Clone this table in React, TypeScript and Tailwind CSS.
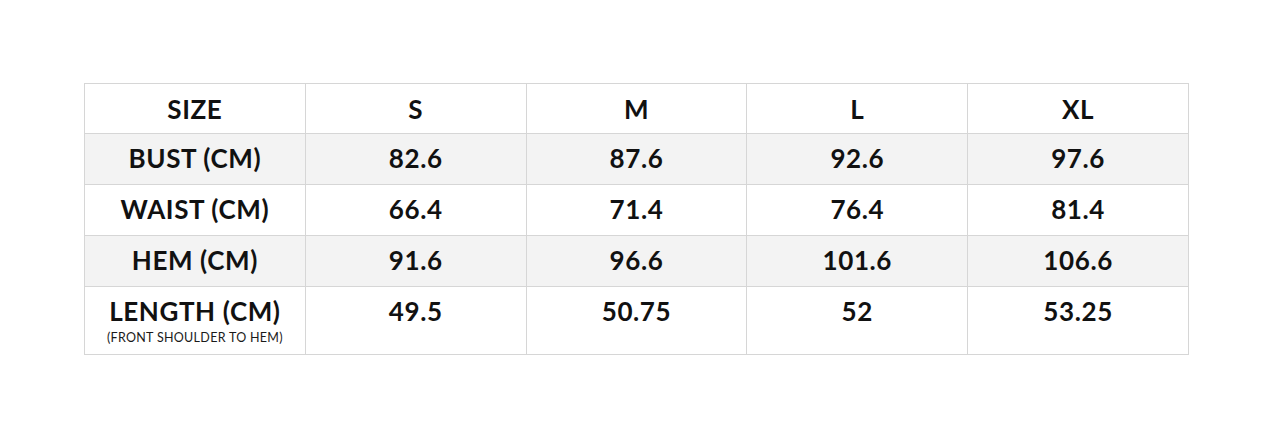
const rows = [
  { label: 'BUST (CM)', values: ['82.6', '87.6', '92.6', '97.6'] },
  { label: 'WAIST (CM)', values: ['66.4', '71.4', '76.4', '81.4'] },
  { label: 'HEM (CM)', values: ['91.6', '96.6', '101.6', '106.6'] },
  { label: 'LENGTH (CM)', values: ['49.5', '50.75', '52', '53.25'], note: '(FRONT SHOULDER TO HEM)' },
];

const sizes = ['S', 'M', 'L', 'XL'];

export default function App() {
  return (
    <div className="h-[430px] w-[1274px] bg-white pl-[84px] pt-[83px] font-['Lato',sans-serif] text-[#111]">
      <table className="w-[1105px] table-fixed border-collapse">
        <thead>
          <tr className="h-[50px] bg-white">
            <th className="border border-[#d6d6d6] pt-[1px] text-[26px] font-bold tracking-[0.6px]">SIZE</th>
            {sizes.map((s) => (
              <th key={s} className="border border-[#d6d6d6] pt-[1px] text-[26px] font-bold tracking-[0.6px]">{s}</th>
            ))}
          </tr>
        </thead>
        <tbody>
          {rows.map((row, i) => (
            <tr key={row.label} className={`${row.note ? 'h-[68px]' : 'h-[51px]'} ${i % 2 === 0 ? 'bg-[#f3f3f3]' : 'bg-white'}`}>
              <td className="border border-[#d6d6d6] pt-[9px] text-center align-top leading-[31px]">
                <div className="text-[26px] font-bold tracking-[0.6px]">{row.label}</div>
                {row.note && <div className="mt-[4px] text-[12.5px] font-normal leading-[14px] tracking-[0.3px] text-[#1a1a1a]">{row.note}</div>}
              </td>
              {row.values.map((v, j) => (
                <td key={j} className="border border-[#d6d6d6] pt-[9px] text-center align-top text-[26px] font-bold leading-[31px] tracking-[0.6px]">
                  {v}
                </td>
              ))}
            </tr>
          ))}
        </tbody>
      </table>
    </div>
  );
}
